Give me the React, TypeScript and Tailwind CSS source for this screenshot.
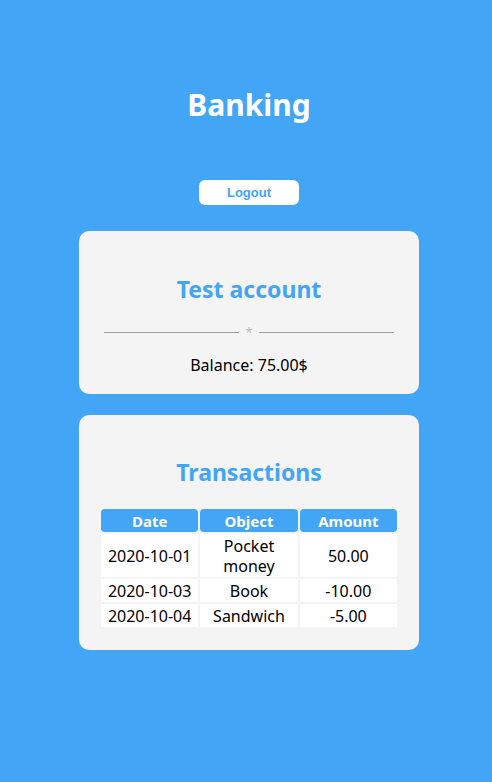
import React from 'react';

interface Transaction {
  date: string;
  object: string;
  amount: string;
}

const transactions: Transaction[] = [
  { date: '2020-10-01', object: 'Pocket money', amount: '50.00' },
  { date: '2020-10-03', object: 'Book', amount: '-10.00' },
  { date: '2020-10-04', object: 'Sandwich', amount: '-5.00' },
];

const font = { fontFamily: '"Noto Sans", "Open Sans", sans-serif' };

const App: React.FC = () => {
  return (
    <div
      className="min-h-[782px] w-full bg-[#42a5f5] flex flex-col items-center pt-[85px] pl-[6px]"
      style={font}
    >
      <h1 className="text-[30px] leading-[40px] font-bold text-white">Banking</h1>

      <button className="mt-[55px] w-[100px] h-[25px] bg-white rounded-[6px] text-[13px] font-bold text-[#42a5f5] font-['Liberation_Sans',Arial,sans-serif]">
        Logout
      </button>

      <section className="mt-[26px] w-[340px] bg-[#f4f4f4] rounded-[10px] flex flex-col items-center pt-[42px] pb-[17px]">
        <h2 className="text-[23px] leading-[32px] font-bold text-[#42a5f5]">Test account</h2>
        <div className="mt-[21px] w-[290px] flex items-center gap-[6px] text-[#b8bcc4]">
          <div className="flex-1 h-px bg-[#9e9e9e]" />
          <span className="text-[13px] leading-none">*</span>
          <div className="flex-1 h-px bg-[#9e9e9e]" />
        </div>
        <p className="mt-[14px] text-[16px] leading-[24px] text-black">Balance: 75.00$</p>
      </section>

      <section className="mt-[21px] w-[340px] bg-[#f4f4f4] rounded-[10px] flex flex-col items-center pt-[41px] pb-[21px] px-[20px]">
        <h2 className="text-[23px] leading-[32px] font-bold text-[#42a5f5]">Transactions</h2>
        <table className="mt-[19px] w-[300px] table-fixed border-separate border-spacing-[2px] text-[16px] leading-[20px]">
          <thead>
            <tr>
              {['Date', 'Object', 'Amount'].map((h) => (
                <th key={h} className="bg-[#42a5f5] text-white text-[15px] font-bold rounded-[4px] py-[1.5px]">
                  {h}
                </th>
              ))}
            </tr>
          </thead>
          <tbody>
            {transactions.map((t, i) => (
              <tr key={i}>
                <td className="bg-white text-center text-black py-[1.5px]">{t.date}</td>
                <td className="bg-white text-center text-black py-[1.5px]">{t.object}</td>
                <td className="bg-white text-center text-black py-[1.5px]">{t.amount}</td>
              </tr>
            ))}
          </tbody>
        </table>
      </section>
    </div>
  );
};

export default App;
